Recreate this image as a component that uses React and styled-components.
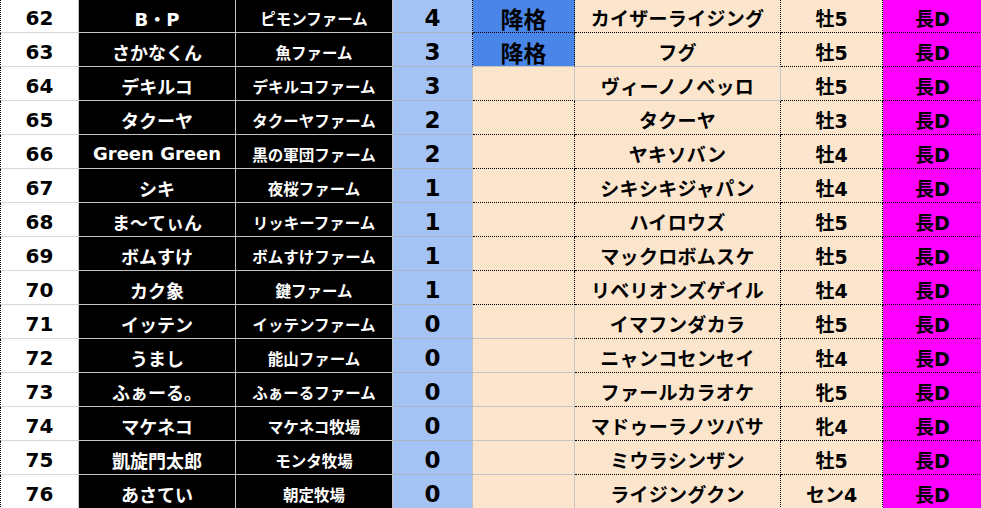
import React from "react";
import styled, { createGlobalStyle, css } from "styled-components";

const Global = createGlobalStyle`
  html, body { margin: 0; padding: 0; background: #fff; overflow: hidden; }
  body { font-family: "DejaVu Sans", "Noto Sans CJK JP", sans-serif; }
`;

const GRAY = "#c4c4c4";
const LINE = {
  g: `1px solid ${GRAY}`,
  d: "1px dotted #000",
  n: "none",
};

const Sheet = styled.div`
  display: flex;
  flex-direction: column;
  width: 982px;
  margin-top: -1px;
`;

const Row = styled.div`
  display: grid;
  grid-template-columns: 79px 157px 157px 80px 102px 206px 102px 99px;
  height: 34px;
`;

const Cell = styled.div`
  box-sizing: border-box;
  display: flex;
  align-items: center;
  justify-content: center;
  padding-top: 4px;
  font-family: "DejaVu Sans", "Noto Sans CJK JP", sans-serif;
  font-weight: 700;
  white-space: nowrap;
  overflow: hidden;
  border-bottom: ${(p) => LINE[p.$b || "g"]};
  border-right: ${(p) => LINE[p.$r || "g"]};
  ${(p) => p.$l && css`border-left: ${LINE[p.$l]};`}
`;

const NumCell = styled(Cell)`
  background: #fff;
  color: #000;
  font-size: 20px;
  border-bottom-color: #d6d6d6;
`;

const NameCell = styled(Cell)`
  background: #000;
  color: #fff;
  font-size: 18px;
`;

const FarmCell = styled(Cell)`
  background: #000;
  color: #fff;
  font-size: 15.5px;
`;

const CountCell = styled(Cell)`
  background: #a4c2f4;
  color: #000;
  font-size: 23px;
  border-bottom-color: #a9b3c2;
`;

const DemoteCell = styled(Cell)`
  background: ${(p) => (p.$on ? "#4a86e8" : "#fce5cd")};
  color: #000;
  font-size: 23px;
`;

const HorseCell = styled(Cell)`
  background: #fce5cd;
  color: #000;
  font-size: 19px;
  letter-spacing: 0.3px;
`;

const SexCell = styled(Cell)`
  background: #fce5cd;
  color: #000;
  font-size: 19px;
`;

const GradeCell = styled(Cell)`
  background: #ff00ff;
  color: #000;
  font-size: 19px;
`;

const rows = [
  [62, "B・P", "ピモンファーム", 4, "降格", "カイザーライジング", "牡5"],
  [63, "さかなくん", "魚ファーム", 3, "降格", "フグ", "牡5"],
  [64, "デキルコ", "デキルコファーム", 3, "", "ヴィーノノベッロ", "牡5"],
  [65, "タクーヤ", "タクーヤファーム", 2, "", "タクーヤ", "牡3"],
  [66, "Green Green", "黒の軍団ファーム", 2, "", "ヤキソバン", "牡4"],
  [67, "シキ", "夜桜ファーム", 1, "", "シキシキジャパン", "牡4"],
  [68, "ま〜てぃん", "リッキーファーム", 1, "", "ハイロウズ", "牡5"],
  [69, "ボムすけ", "ボムすけファーム", 1, "", "マックロボムスケ", "牡5"],
  [70, "カク象", "鍵ファーム", 1, "", "リベリオンズゲイル", "牡4"],
  [71, "イッテン", "イッテンファーム", 0, "", "イマフンダカラ", "牡5"],
  [72, "うまし", "能山ファーム", 0, "", "ニャンコセンセイ", "牡4"],
  [73, "ふぁーる。", "ふぁーるファーム", 0, "", "ファールカラオケ", "牝5"],
  [74, "マケネコ", "マケネコ牧場", 0, "", "マドゥーラノツバサ", "牝4"],
  [75, "凱旋門太郎", "モンタ牧場", 0, "", "ミウラシンザン", "牡5"],
  [76, "あさてい", "朝定牧場", 0, "", "ライジングクン", "セン4"],
];

function borders(i) {
  if (i === 0) return { countR: "d", demB: "d", demR: "d", hB: "d", hR: "d" };
  if (i === 1) return { countR: "d", demB: "g", demR: "d", hB: "g", hR: "d" };
  if (i === 2) return { countR: "g", demB: "d", demR: "g", hB: "g", hR: "g" };
  if (i <= 8) return { countR: "g", demB: "d", demR: "d", hB: "d", hR: "d" };
  return { countR: "g", demB: "g", demR: "g", hB: "d", hR: "d" };
}

export default function App() {
  return (
    <>
      <Global />
      <Sheet>
        {rows.map((r, i) => {
          const b = borders(i);
          return (
            <Row key={r[0]}>
              <NumCell $l="d">{r[0]}</NumCell>
              <NameCell>{r[1]}</NameCell>
              <FarmCell>{r[2]}</FarmCell>
              <CountCell $r={b.countR}>{r[3]}</CountCell>
              <DemoteCell $on={!!r[4]} $b={b.demB} $r={b.demR}>
                {r[4]}
              </DemoteCell>
              <HorseCell $b={b.hB} $r={b.hR}>{r[5]}</HorseCell>
              <SexCell $b="d" $r="d">{r[6]}</SexCell>
              <GradeCell $b="d" $r="n">長D</GradeCell>
            </Row>
          );
        })}
      </Sheet>
    </>
  );
}
